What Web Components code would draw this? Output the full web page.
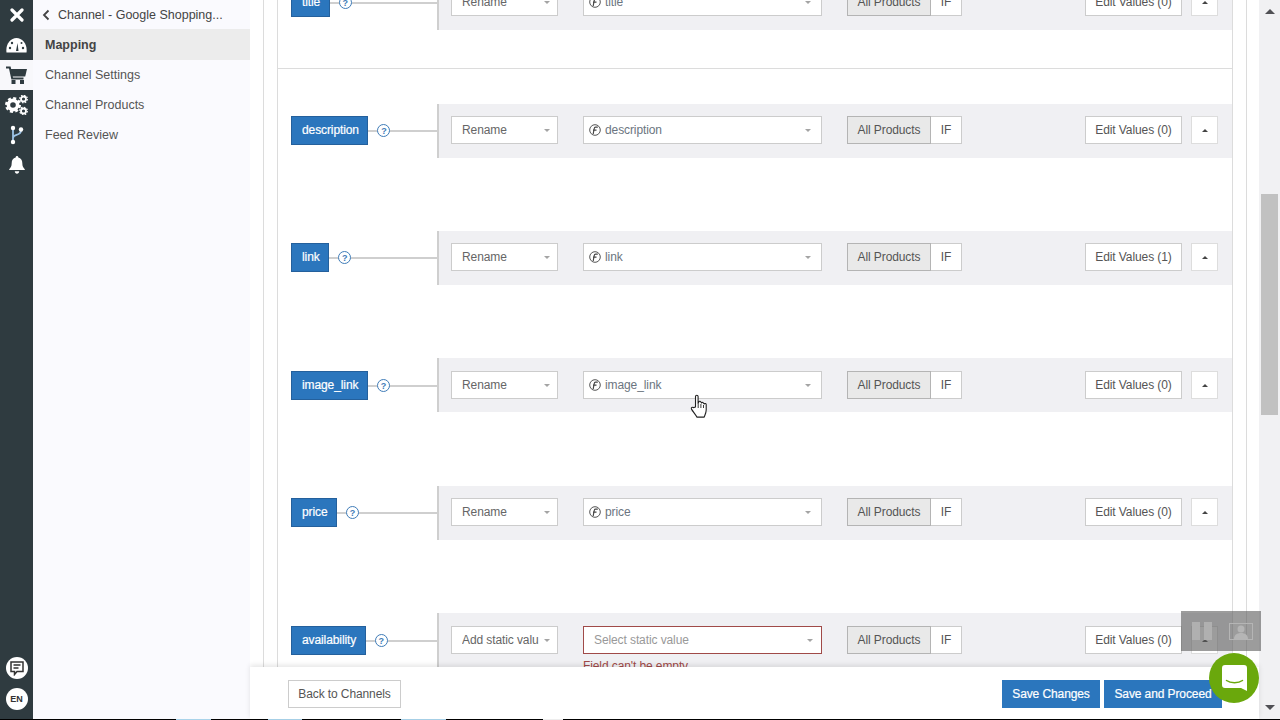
<!DOCTYPE html>
<html>
<head>
<meta charset="utf-8">
<title>Channel Mapping</title>
<style>
  html, body { margin: 0; height: 100%; overflow: hidden; background: #fff; }
  body { display: flex; flex-direction: column; font: 12px "Liberation Sans", Arial, sans-serif; color: #555; letter-spacing: -.1px; }
</style>
</head>
<body>
<app-shell>
  <icon-rail slot="rail"></icon-rail>
  <side-menu slot="menu" title="Channel - Google Shopping..."></side-menu>
  <mapping-card first>
    <map-row name="title" source="title" edit="0"></map-row>
  </mapping-card>
  <mapping-card>
    <map-row name="description" source="description" edit="0"></map-row>
    <map-row name="link" source="link" edit="1"></map-row>
    <map-row name="image_link" source="image_link" edit="0" low></map-row>
    <map-row name="price" source="price" edit="0" wide-gap></map-row>
    <map-row name="availability" edit="0" static-value low></map-row>
  </mapping-card>
  <channel-footer slot="footer"></channel-footer>
</app-shell>
<task-strip></task-strip>
<video-controls></video-controls>
<chat-bubble></chat-bubble>
<hand-cursor></hand-cursor>

<script>
class AppShell extends HTMLElement {
  constructor() {
    super();
    this.attachShadow({ mode: 'open' });
    this.shadowRoot.innerHTML = `
      <style>
        :host { display: flex; flex: 1; min-height: 0; }
        .main { flex: 1; min-width: 0; display: flex; flex-direction: column; }
        .view { flex: 1; min-height: 0; overflow: hidden; padding: 0 12px 0 13px; }
        .outer {
          margin-top: -24px;
          height: 800px;
          border: solid #dcdcdc;
          border-width: 0 1px;
          padding: 0 13px;
        }
        .bar { width: 21px; background: #f1f1f3; display: flex; flex-direction: column; align-items: center; padding: 0 2px; box-sizing: border-box; }
        .arrow { width: 0; height: 0; border: 5px solid transparent; }
        .up { border-bottom: 5px solid #505055; border-top: 0; margin-top: 9px; }
        .down { border-top: 5px solid #505055; border-bottom: 0; margin-bottom: 9px; }
        .thumb { width: 17px; height: 221px; background: #c1c1c1; margin: 180px 0 auto; }
      </style>
      <slot name="rail"></slot>
      <slot name="menu"></slot>
      <div class="main">
        <div class="view"><div class="outer"><slot></slot></div></div>
        <slot name="footer"></slot>
      </div>
      <div class="bar"><div class="arrow up"></div><div class="thumb"></div><div class="arrow down"></div></div>
    `;
  }
}

class IconRail extends HTMLElement {
  constructor() {
    super();
    this.attachShadow({ mode: 'open' });
    this.shadowRoot.innerHTML = `
      <style>
        :host { display: flex; flex-direction: column; width: 33px; background: #2f3b40; flex: none; }
        .item { height: 30px; display: flex; align-items: center; justify-content: center; }
        .item.on { background: #f8f8fb; }
        .spacer { flex: 1; }
        .round {
          width: 22px; height: 22px; border-radius: 50%; background: #fff; color: #333;
          display: flex; align-items: center; justify-content: center;
          margin: 0 auto 9px; font-size: 9px; font-weight: bold; letter-spacing: 0;
        }
        svg { display: block; }
      </style>
      <div class="item">
        <svg width="14" height="14" viewBox="0 0 14 14"><path d="M2 2l10 10M12 2L2 12" stroke="#fff" stroke-width="3.2" stroke-linecap="round"/></svg>
      </div>
      <div class="item">
        <svg width="21" height="16" viewBox="0 0 21 16">
          <path d="M.5 15.5C-.6 7 4.5 1 10.500 1S21.600 7 20.500 15.500z" fill="#fff"/>
          <path d="M10 14l1.500-8 1 8z" fill="#2f3b40"/>
          <circle cx="4" cy="11" r="1.200" fill="#2f3b40"/><circle cx="6" cy="6" r="1.200" fill="#2f3b40"/>
          <circle cx="15.500" cy="6" r="1" fill="#2f3b40"/><circle cx="17" cy="11" r="1.200" fill="#2f3b40"/>
        </svg>
      </div>
      <div class="item on">
        <svg width="21" height="18" viewBox="0 0 21 18">
          <path d="M0 1.500h3.800l2.400 11h11.300" fill="none" stroke="#2f3b40" stroke-width="2"/>
          <path d="M4.500 3H21l-1.800 7.500H6z" fill="#2f3b40"/>
          <rect x="5.500" y="14" width="4" height="4" fill="#2f3b40"/><rect x="14" y="14" width="4" height="4" fill="#2f3b40"/>
        </svg>
      </div>
      <div class="item">
        <svg width="23" height="20" viewBox="0 0 23 20">
          <circle cx="8" cy="10" r="4.600" fill="none" stroke="#fff" stroke-width="3.600"/>
          <circle cx="8" cy="10" r="6.800" fill="none" stroke="#fff" stroke-width="2.400" stroke-dasharray="3 2.340"/>
          <circle cx="18.500" cy="4" r="2.500" fill="none" stroke="#fff" stroke-width="1.800"/>
          <circle cx="18.500" cy="4" r="3.800" fill="none" stroke="#fff" stroke-width="1.200" stroke-dasharray="1.500 1.480"/>
          <circle cx="18.500" cy="16" r="2.500" fill="none" stroke="#fff" stroke-width="1.800"/>
          <circle cx="18.500" cy="16" r="3.800" fill="none" stroke="#fff" stroke-width="1.200" stroke-dasharray="1.500 1.480"/>
        </svg>
      </div>
      <div class="item">
        <svg width="14" height="20" viewBox="0 0 14 20">
          <path d="M3 4v12M3 13c0-4 8-2 8-7.500" fill="none" stroke="#9cc3e6" stroke-width="1.800"/>
          <circle cx="3" cy="3" r="2.200" fill="#fff"/><circle cx="3" cy="17" r="2.200" fill="#fff"/><circle cx="11" cy="4.500" r="2.200" fill="#fff"/>
        </svg>
      </div>
      <div class="item">
        <svg width="16" height="18" viewBox="0 0 16 18">
          <path d="M8 0c.8 0 1.300.6 1.300 1.400C12 2 13.300 4 13.300 7c0 3.500 1 4.500 2.500 6.300V14H.2v-.7C1.700 11.500 2.700 10.500 2.700 7c0-3 1.300-5 4-5.600C6.700.6 7.200 0 8 0z" fill="#fff"/>
          <path d="M5.800 15.200h4.400c0 1.500-1 2.500-2.200 2.500s-2.200-1-2.200-2.500z" fill="#fff"/>
        </svg>
      </div>
      <div class="spacer"></div>
      <div class="round">
        <svg width="14" height="15" viewBox="0 0 14 15">
          <path d="M1 1h12v9.500H7l-2.500 3v-3H1z" fill="none" stroke="#333" stroke-width="1.500"/>
          <path d="M3.500 4h7M3.500 7h5" stroke="#333" stroke-width="1.300"/>
        </svg>
      </div>
      <div class="round">EN</div>
    `;
  }
}

class SideMenu extends HTMLElement {
  constructor() {
    super();
    this.attachShadow({ mode: 'open' });
  }

  connectedCallback() {
    const title = this.getAttribute('title') || '';
    this.removeAttribute('title');
    this.shadowRoot.innerHTML = `
      <style>
        :host { display: block; width: 217px; flex: none; background: #fafafe; font-size: 12.5px; color: #555; letter-spacing: 0; }
        .head { height: 29px; display: flex; align-items: center; padding-left: 9px; color: #444; }
        .head svg { margin-right: 8px; }
        .item { height: 30px; line-height: 30px; padding-left: 12px; }
        .item.on { background: #ececec; color: #444; font-weight: bold; height: 31px; line-height: 32px; }
      </style>
      <div class="head">
        <svg width="8" height="12" viewBox="0 0 8 12"><path d="M6.500 1.500L2 6l4.500 4.500" fill="none" stroke="#444" stroke-width="1.800"/></svg>
        ${title}
      </div>
      <div class="item on">Mapping</div>
      <div class="item">Channel Settings</div>
      <div class="item">Channel Products</div>
      <div class="item">Feed Review</div>
    `;
  }
}

class MappingCard extends HTMLElement {
  constructor() {
    super();
    this.attachShadow({ mode: 'open' });
    this.shadowRoot.innerHTML = `
      <style>
        :host {
          display: flex;
          flex-direction: column;
          gap: 73px;
          border: solid #dcdcdc;
          border-width: 0 1px;
          padding-top: 35px;
        }
        :host([first]) { padding: 0 0 38px; border-bottom-width: 1px; }
      </style>
      <slot></slot>
    `;
  }
}

class MapRow extends HTMLElement {
  constructor() {
    super();
    this.attachShadow({ mode: 'open' });
  }

  connectedCallback() {
    const name = this.getAttribute('name') || '';
    const source = this.getAttribute('source') || '';
    const edit = this.getAttribute('edit') || '0';
    const isStatic = this.hasAttribute('static-value');
    const sourceBox = isStatic
      ? `<div class="col">
           <div class="select source invalid"><span class="placeholder">Select static value</span><i class="caret"></i></div>
           <div class="error">Field can't be empty</div>
         </div>`
      : `<div class="select source">
           <svg class="fx" width="12" height="12" viewBox="0 0 12 12">
             <circle cx="6" cy="6" r="5.300" fill="none" stroke="#555" stroke-width="1"/>
             <path d="M8.800 3.200H6.500C5.500 3.200 5.300 4 5.100 5L4.200 10M4 6.200h3.500" fill="none" stroke="#444" stroke-width="1.200"/>
           </svg>
           <span class="value">${source}</span><i class="caret"></i>
         </div>`;

    this.shadowRoot.innerHTML = `
      <style>
        :host { display: flex; align-items: flex-start; padding-left: 13px; height: 54px; }
        :host([wide-gap]) { margin-top: 1px; }
        :host([low]) .band { padding-top: 13px; }
        :host([low]) .left { height: 55px; }
        .left {
          width: 146px; height: 53px; flex: none;
          display: flex; align-items: center;
          background: linear-gradient(#cfcfcf, #cfcfcf) center / 100% 2px no-repeat;
        }
        .label {
          background: #2b76bd; border: 1px solid #24609c; color: #fff;
          height: 29px; line-height: 27px; padding: 0 8.500px 0 10px; box-sizing: border-box;
          -webkit-text-stroke: .2px #fff;
        }
        .help {
          width: 13px; height: 13px; box-sizing: border-box; border: 1.300px solid #3f7cb8; border-radius: 50%;
          background: #fff; color: #3f7cb8; margin-left: 9px; font-size: 9px; font-weight: bold;
          display: flex; align-items: center; justify-content: center;
        }
        .band {
          flex: 1; min-width: 0; height: 54px; box-sizing: border-box;
          background: #f0f0f3; border-left: 2px solid #cfcfcf;
          padding: 12px 14px 0 12px;
          display: flex; align-items: flex-start;
        }
        .select {
          height: 28px; box-sizing: border-box; background: #fff; border: 1px solid #ccc;
          display: flex; align-items: center; color: #666;
        }
        .mode { width: 107px; padding-left: 10px; margin-right: 25px; flex: none; overflow: hidden; white-space: nowrap; }
        .mode span { flex: 1; min-width: 0; overflow: hidden; }
        .mode .caret { margin: 0 7px 0 4px; }
        .source { width: 239px; padding-left: 5px; flex: none; }
        .fx { margin-right: 4px; flex: none; }
        .value { flex: 1; color: #6b7580; }
        .caret { width: 0; height: 0; border: 3.500px solid transparent; border-top: 3.500px solid #a4a4a4; border-bottom: 0; flex: none; margin-right: 10px; }
        .col { width: 239px; flex: none; }
        .invalid { border-color: #a04a48; padding-left: 10px; }
        .invalid .caret { margin-right: 8px; }
        .placeholder { flex: 1; color: #999; }
        .error { color: #a04a48; margin-top: 5px; line-height: 14px; }
        .seg { display: flex; margin-left: 25px; height: 28px; box-sizing: border-box; }
        .seg div { border: 1px solid #ccc; height: 28px; line-height: 26px; box-sizing: border-box; background: #fff; color: #555; text-align: center; }
        .seg .all { width: 84px; background: #e9e9e9; border-color: #b4b4b4; }
        .seg .if { width: 31px; border-left: 0; }
        .edit { margin-left: auto; width: 97px; height: 28px; line-height: 26px; box-sizing: border-box; border: 1px solid #ccc; background: #fff; text-align: center; color: #555; }
        .up { width: 27px; height: 28px; box-sizing: border-box; margin-left: 9px; border: 1px solid #ddd; background: #fff; display: flex; align-items: center; justify-content: center; }
        .up i { width: 0; height: 0; border: 3.500px solid transparent; border-bottom: 3.500px solid #444; border-top: 0; }
      </style>
      <div class="left"><div class="label">${name}</div><div class="help">?</div></div>
      <div class="band">
        <div class="select mode"><span>${isStatic ? 'Add static valu' : 'Rename'}</span><i class="caret"></i></div>
        ${sourceBox}
        <div class="seg"><div class="all">All Products</div><div class="if">IF</div></div>
        <div class="edit">Edit Values (${edit})</div>
        <div class="up"><i></i></div>
      </div>
    `;
  }
}

class ChannelFooter extends HTMLElement {
  constructor() {
    super();
    this.attachShadow({ mode: 'open' });
    this.shadowRoot.innerHTML = `
      <style>
        :host {
          display: flex; align-items: flex-start; height: 52px; flex: none; box-sizing: border-box;
          background: #fff; padding: 13px 37px 0 38px; box-shadow: 0 -2px 5px rgba(0,0,0,.1);
          position: relative; font-size: 12px;
        }
        .btn { height: 28px; line-height: 26px; box-sizing: border-box; border: 1px solid #ccc; text-align: center; color: #555; }
        .back { width: 113px; margin-right: auto; }
        .primary { background: #2b76bd; border-color: #2b76bd; color: #fff; -webkit-text-stroke: .2px #fff; }
        .save { width: 98px; margin-right: 4px; }
        .proceed { width: 118px; }
      </style>
      <div class="btn back">Back to Channels</div>
      <div class="btn primary save">Save Changes</div>
      <div class="btn primary proceed">Save and Proceed</div>
    `;
  }
}

class TaskStrip extends HTMLElement {
  constructor() {
    super();
    this.attachShadow({ mode: 'open' });
    this.shadowRoot.innerHTML = `
      <style>
        :host { display: flex; height: 1px; flex: none; background: #000; }
        i { display: block; height: 1px; }
        .b { background: #a9d3ea; }
        .w { background: #f1f1f1; }
      </style>
      <i style="width:176px"></i><i class="b" style="width:35px"></i>
      <i style="width:57px"></i><i class="b" style="width:34px"></i>
      <i style="width:99px"></i><i class="b" style="width:45px"></i>
      <i style="width:97px"></i><i class="w" style="width:20px"></i>
    `;
  }
}

class VideoControls extends HTMLElement {
  constructor() {
    super();
    this.attachShadow({ mode: 'open' });
    this.shadowRoot.innerHTML = `
      <style>
        :host {
          position: absolute; left: 1181px; top: 611px; width: 80px; height: 40px;
          background: rgba(90,90,90,.6);
          display: flex; align-items: center; justify-content: space-between;
          padding: 0 8px 0 11px; box-sizing: border-box;
        }
      </style>
      <svg width="20" height="18" viewBox="0 0 20 18"><rect width="8" height="18" fill="#b0b0b0"/><rect x="12" width="8" height="18" fill="#b0b0b0"/></svg>
      <svg width="24" height="17" viewBox="0 0 24 17">
        <rect x=".5" y=".5" width="23" height="16" fill="none" stroke="#b5b5b5"/>
        <circle cx="12" cy="6" r="3.500" fill="#b5b5b5"/><path d="M5 16c0-4 3-6 7-6s7 2 7 6z" fill="#b5b5b5"/>
      </svg>
    `;
  }
}

class ChatBubble extends HTMLElement {
  constructor() {
    super();
    this.attachShadow({ mode: 'open' });
    this.shadowRoot.innerHTML = `
      <style>
        :host {
          position: absolute; left: 1209px; top: 653px; width: 50px; height: 50px; border-radius: 50%;
          background: #6aa80c; display: flex; align-items: center; justify-content: center;
        }
      </style>
      <svg width="25" height="26" viewBox="0 0 25 26">
        <path d="M3 0h19a3 3 0 0 1 3 3v23l-6-3H3a3 3 0 0 1-3-3V3a3 3 0 0 1 3-3z" fill="#fff"/>
        <path d="M4.500 15.500c4 3 12 3 16 0" fill="none" stroke="#6aa80c" stroke-width="1.500" stroke-linecap="round"/>
      </svg>
    `;
  }
}

class HandCursor extends HTMLElement {
  constructor() {
    super();
    this.attachShadow({ mode: 'open' });
    this.shadowRoot.innerHTML = `
      <style>:host { position: absolute; left: 690px; top: 394px; width: 18px; height: 25px; }</style>
      <svg width="18" height="25" viewBox="0 0 18 25">
        <path d="M5.500 13V2.500a1.300 1.300 0 0 1 2.600 0V9.500l.6-1.500a1.200 1.200 0 0 1 2.300.3l.5.7a1.200 1.200 0 0 1 2.200.4l.5.6a1.100 1.100 0 0 1 2 .6v5.500c0 3-1.500 5.500-2 7H7c-1.500-2.500-4-5.500-5.500-8-.7-1.300.8-2.500 2-1.500z" fill="#fff" stroke="#222" stroke-width="1.100" stroke-linejoin="round"/>
        <path d="M8.200 10v4M10.900 10v4M13.500 11v3" stroke="#222" stroke-width=".9"/>
      </svg>
    `;
  }
}

customElements.define('app-shell', AppShell);
customElements.define('icon-rail', IconRail);
customElements.define('side-menu', SideMenu);
customElements.define('mapping-card', MappingCard);
customElements.define('map-row', MapRow);
customElements.define('channel-footer', ChannelFooter);
customElements.define('task-strip', TaskStrip);
customElements.define('video-controls', VideoControls);
customElements.define('chat-bubble', ChatBubble);
customElements.define('hand-cursor', HandCursor);
</script>
</body>
</html>
